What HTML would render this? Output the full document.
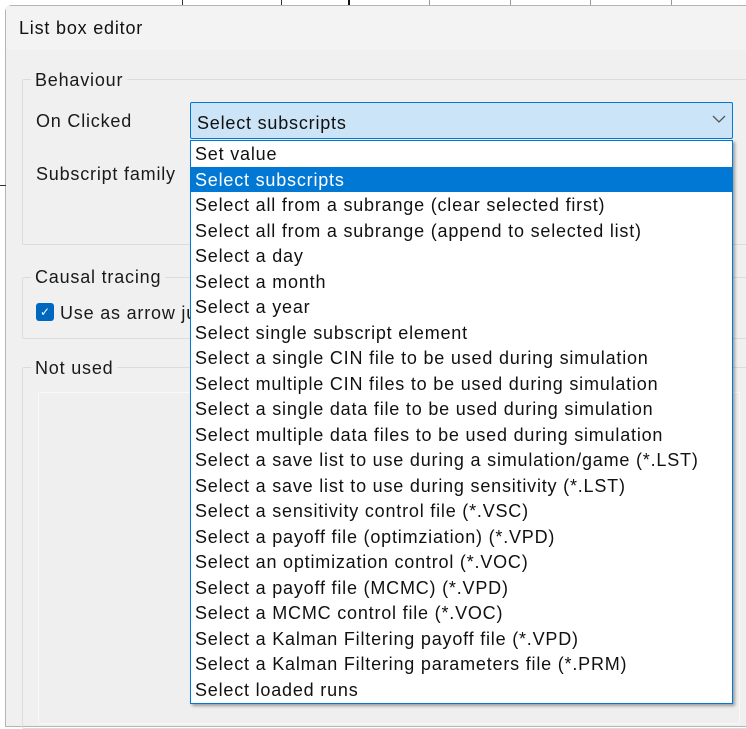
<!DOCTYPE html>
<html><head><style>
body{margin:0;width:746px;height:714px;overflow:hidden;background:#fff;font-family:"Liberation Sans",sans-serif;position:relative}
.abs{position:absolute}
.t{font-size:18px;letter-spacing:0.8px}
.win{left:5px;top:5px;width:760px;height:720px;background:#f0f0f0;border:1px solid #b5b5b5;border-radius:7px 0 0 0}
.title{left:6px;top:6px;width:760px;height:44px;background:#f3f3f3}
.gb{border:1px solid #dcdcdc;border-radius:2px}
.lbl{color:#1a1a1a;background:#f0f0f0;padding:0 4px}
.list{left:190px;top:140px;width:541px;height:562px;background:#fff;border:1px solid #0078d4;box-shadow:2px 2px 3px rgba(0,0,0,.35)}
.list div{height:25.5px;line-height:27px;font-size:18px;letter-spacing:0.8px;padding-left:4px;color:#111;white-space:nowrap}
.list .sel{background:#0078d4;color:#fff}
</style></head><body>
<div class="abs" style="left:182px;top:0;width:1px;height:5px;background:#333"></div>
<div class="abs" style="left:281px;top:0;width:1px;height:5px;background:#333"></div>
<div class="abs" style="left:348px;top:0;width:2px;height:5px;background:#111"></div>
<div class="abs" style="left:429px;top:0;width:1px;height:5px;background:#999"></div>
<div class="abs" style="left:510px;top:0;width:1px;height:5px;background:#999"></div>
<div class="abs" style="left:590px;top:0;width:1px;height:5px;background:#999"></div>
<div class="abs" style="left:671px;top:0;width:1px;height:5px;background:#999"></div>
<div class="abs win"></div>
<div class="abs title"></div>
<div class="abs t" style="left:19px;top:18px;color:#111">List box editor</div>

<div class="abs gb" style="left:22px;top:79px;width:740px;height:164px"></div>
<div class="abs lbl t" style="left:31px;top:70px">Behaviour</div>
<div class="abs t" style="left:36px;top:111px;color:#1a1a1a">On Clicked</div>
<div class="abs t" style="left:36px;top:164px;color:#1a1a1a">Subscript family</div>
<div class="abs" style="left:0;top:185px;width:6px;height:1px;background:#333"></div>

<div class="abs gb" style="left:22px;top:277px;width:740px;height:60px"></div>
<div class="abs lbl t" style="left:31px;top:267px">Causal tracing</div>
<div class="abs" style="left:36px;top:303px;width:18px;height:18px;background:#0067c0;border-radius:3px;color:#fff;font-size:12px;text-align:center;line-height:18px">✓</div>
<div class="abs t" style="left:60px;top:303px;color:#1a1a1a">Use as arrow ju</div>

<div class="abs gb" style="left:22px;top:367px;width:740px;height:360px"></div>
<div class="abs lbl t" style="left:31px;top:358px">Not used</div>
<div class="abs" style="left:38px;top:392px;width:700px;height:330px;background:#efefef;border:1px solid #f8f8f8"></div>

<div class="abs" style="left:190px;top:102px;width:541px;height:35px;background:#cce4f7;border:1px solid #0078d4;border-radius:2px"></div>
<div class="abs t" style="left:197px;top:113px;color:#111">Select subscripts</div>
<svg class="abs" style="left:712px;top:114px" width="14" height="10"><path d="M1 2 L7 8 L13 2" fill="none" stroke="#555" stroke-width="1.3"/></svg>

<div class="abs list">
<div>Set value</div>
<div class="sel">Select subscripts</div>
<div>Select all from a subrange (clear selected first)</div>
<div>Select all from a subrange (append to selected list)</div>
<div>Select a day</div>
<div>Select a month</div>
<div>Select a year</div>
<div>Select single subscript element</div>
<div>Select a single CIN file to be used during simulation</div>
<div>Select multiple CIN files to be used during simulation</div>
<div>Select a single data file to be used during simulation</div>
<div>Select multiple data files to be used during simulation</div>
<div>Select a save list to use during a simulation/game (*.LST)</div>
<div>Select a save list to use during sensitivity (*.LST)</div>
<div>Select a sensitivity control file (*.VSC)</div>
<div>Select a payoff file (optimziation) (*.VPD)</div>
<div>Select an optimization control (*.VOC)</div>
<div>Select a payoff file (MCMC) (*.VPD)</div>
<div>Select a MCMC control file (*.VOC)</div>
<div>Select a Kalman Filtering payoff file (*.VPD)</div>
<div>Select a Kalman Filtering parameters file (*.PRM)</div>
<div>Select loaded runs</div>
</div>
</body></html>
